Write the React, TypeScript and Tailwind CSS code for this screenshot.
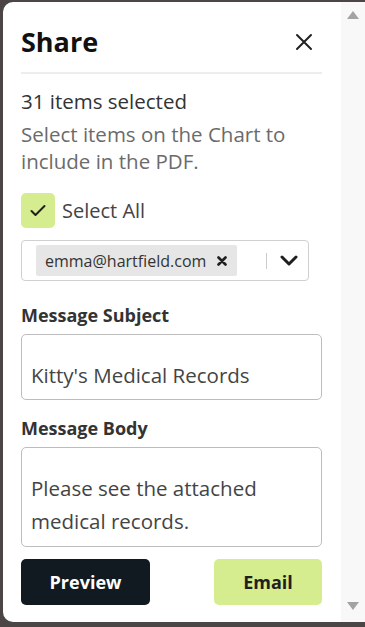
import React from "react";

const font = { fontFamily: '"Open Sans", "Noto Sans", sans-serif' };

function CloseIcon() {
  return (
    <svg width="18" height="18" viewBox="0 0 18 18" fill="none" stroke="#222" strokeWidth="2" strokeLinecap="round">
      <path d="M2 2L16 16M16 2L2 16" />
    </svg>
  );
}

function Check() {
  return (
    <svg width="16" height="13" viewBox="0 0 16 13" fill="none" stroke="#1f1f1f" strokeWidth="2" strokeLinecap="round" strokeLinejoin="round">
      <path d="M1.5 7L5.5 11L14.5 2" />
    </svg>
  );
}

function SmallX() {
  return (
    <svg width="10" height="10" viewBox="0 0 10 10" fill="none" stroke="#1f1f1f" strokeWidth="2.6" strokeLinecap="round">
      <path d="M1.5 1.5L8.5 8.5M8.5 1.5L1.5 8.5" />
    </svg>
  );
}

function Chevron() {
  return (
    <svg width="18" height="11" viewBox="0 0 18 11" fill="none" stroke="#1f1f1f" strokeWidth="3" strokeLinecap="round" strokeLinejoin="round">
      <path d="M2 2L9 9L16 2" />
    </svg>
  );
}

export default function App() {
  return (
    <div className="w-[365px] h-[627px] overflow-hidden bg-[#4b4545] pt-[2px] pl-[3px]" style={font}>
      <div className="flex h-[620px] bg-white rounded-l-[10px] overflow-hidden">
        {/* panel content */}
        <div className="w-[338px] shrink-0 pl-[18px] pr-[19px] pt-[17px] flex flex-col">
          <div className="flex items-center justify-between h-[44px]">
            <h2 className="text-[27px] font-bold text-[#111] leading-none">Share</h2>
            <button className="mr-[9px] mt-[2px]">
              <CloseIcon />
            </button>
          </div>
          <div className="mt-[9px] h-[2px] bg-[#ededed]" />

          <p className="mt-[14px] text-[20.5px] leading-[27px] text-[#333]">31 items selected</p>
          <p className="mt-[6px] text-[20.5px] leading-[27px] text-[#6b6b6b]">
            Select items on the Chart to include in the PDF.
          </p>

          <label className="mt-[18px] flex items-center gap-[7px]">
            <span className="w-[34px] h-[35px] rounded-[5px] bg-[#d6ed8f] flex items-center justify-center">
              <Check />
            </span>
            <span className="text-[20px] text-[#444]">Select All</span>
          </label>

          <div className="mt-[12px] w-[288px] h-[41px] border border-[#d0d0d0] rounded-[4px] flex items-center">
            <div className="ml-[14px] h-[31px] w-[201px] bg-[#e6e6e6] rounded-[2px] flex items-center justify-between pl-[9px] pr-[10px]">
              <span className="text-[16px] text-[#333]">emma@hartfield.com</span>
              <SmallX />
            </div>
            <div className="ml-[29px] w-px h-[16px] bg-[#cccccc]" />
            <div className="ml-[13px]">
              <Chevron />
            </div>
          </div>

          <p className="mt-[22px] text-[18px] leading-[24px] font-bold text-[#333]">Message Subject</p>
          <div className="mt-[7px] h-[66px] border border-[#bdbdbd] rounded-[5px] pl-[9px] pt-[27px]">
            <span className="text-[20.5px] leading-[27px] text-[#444]">Kitty's Medical Records</span>
          </div>

          <p className="mt-[16px] text-[18px] leading-[24px] font-bold text-[#333]">Message Body</p>
          <div className="mt-[7px] h-[100px] border border-[#bdbdbd] rounded-[5px] pl-[9px] pt-[24px] text-[20.5px] leading-[33px] text-[#444]">
            Please see the attached medical records.
          </div>

          <div className="mt-[12px] flex justify-between">
            <button className="w-[129px] h-[46px] rounded-[5px] bg-[#121a21] text-white text-[18px] font-bold">
              Preview
            </button>
            <button className="w-[108px] h-[46px] rounded-[5px] bg-[#d6ed8f] text-[#1f1f1f] text-[18px] font-bold">
              Email
            </button>
          </div>
        </div>

        {/* scrollbar track */}
        <div className="flex-1 bg-[#f8f8f8] flex flex-col items-center justify-between pt-[9px] pb-[12px]">
          <svg width="12" height="8" viewBox="0 0 12 8">
            <path d="M6 0L12 8H0Z" fill="#a3a3a3" />
          </svg>
          <svg width="12" height="8" viewBox="0 0 12 8">
            <path d="M0 0H12L6 8Z" fill="#a3a3a3" />
          </svg>
        </div>
      </div>
    </div>
  );
}
